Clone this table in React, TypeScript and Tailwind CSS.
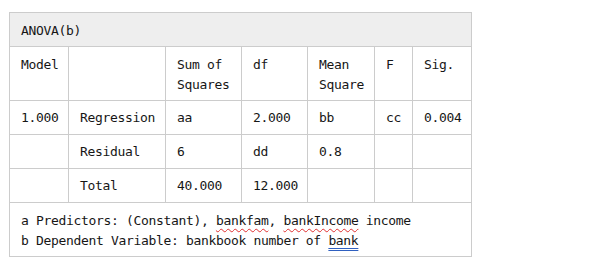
import React from 'react';

const cell = 'border border-[#cccccc] px-[11px] pt-[8px] pb-[5px] align-top text-left font-normal';
const bodyCell = 'border border-[#cccccc] px-[11px] pt-[7px] pb-[6px] align-top text-left';

const rows = [
  ['1.000', 'Regression', 'aa', '2.000', 'bb', 'cc', '0.004'],
  ['', 'Residual', '6', 'dd', '0.8', '', ''],
  ['', 'Total', '40.000', '12.000', '', '', ''],
];

export default function App() {
  return (
    <div className="w-[596px] h-[268px] bg-white pt-[12px] pl-[9px] text-[#161616] text-[13px] tracking-[-0.33px] leading-[20px] font-['DejaVu_Sans_Mono','Liberation_Mono',monospace]">
      <table className="border-collapse w-[462px] table-fixed">
        <colgroup>
          <col className="w-[59px]" />
          <col className="w-[97px]" />
          <col className="w-[76px]" />
          <col className="w-[66px]" />
          <col className="w-[67px]" />
          <col className="w-[38px]" />
          <col className="w-[59px]" />
        </colgroup>
        <thead>
          <tr>
            <th colSpan={7} className={`${cell} bg-[#eeeeee]`}>ANOVA(b)</th>
          </tr>
          <tr>
            <th className={cell}>Model</th>
            <th className={cell}></th>
            <th className={cell}>Sum of<br />Squares</th>
            <th className={cell}>df</th>
            <th className={cell}>Mean<br />Square</th>
            <th className={cell}>F</th>
            <th className={cell}>Sig.</th>
          </tr>
        </thead>
        <tbody>
          {rows.map((r, i) => (
            <tr key={i}>
              {r.map((v, j) => (
                <td key={j} className={`${bodyCell} h-[34px]`}>{v}</td>
              ))}
            </tr>
          ))}
          <tr>
            <td colSpan={7} className={cell}>
              <div>
                a Predictors: (Constant),{' '}
                <span className="underline decoration-wavy decoration-[#e03030] decoration-1 underline-offset-[3px]">bankfam</span>,{' '}
                <span className="underline decoration-wavy decoration-[#e03030] decoration-1 underline-offset-[3px]">bankIncome</span> income
              </div>
              <div>
                b Dependent Variable: bankbook number of{' '}
                <span className="underline decoration-double decoration-[#3060c0] decoration-1 underline-offset-[3px]">bank</span>
              </div>
            </td>
          </tr>
        </tbody>
      </table>
    </div>
  );
}
